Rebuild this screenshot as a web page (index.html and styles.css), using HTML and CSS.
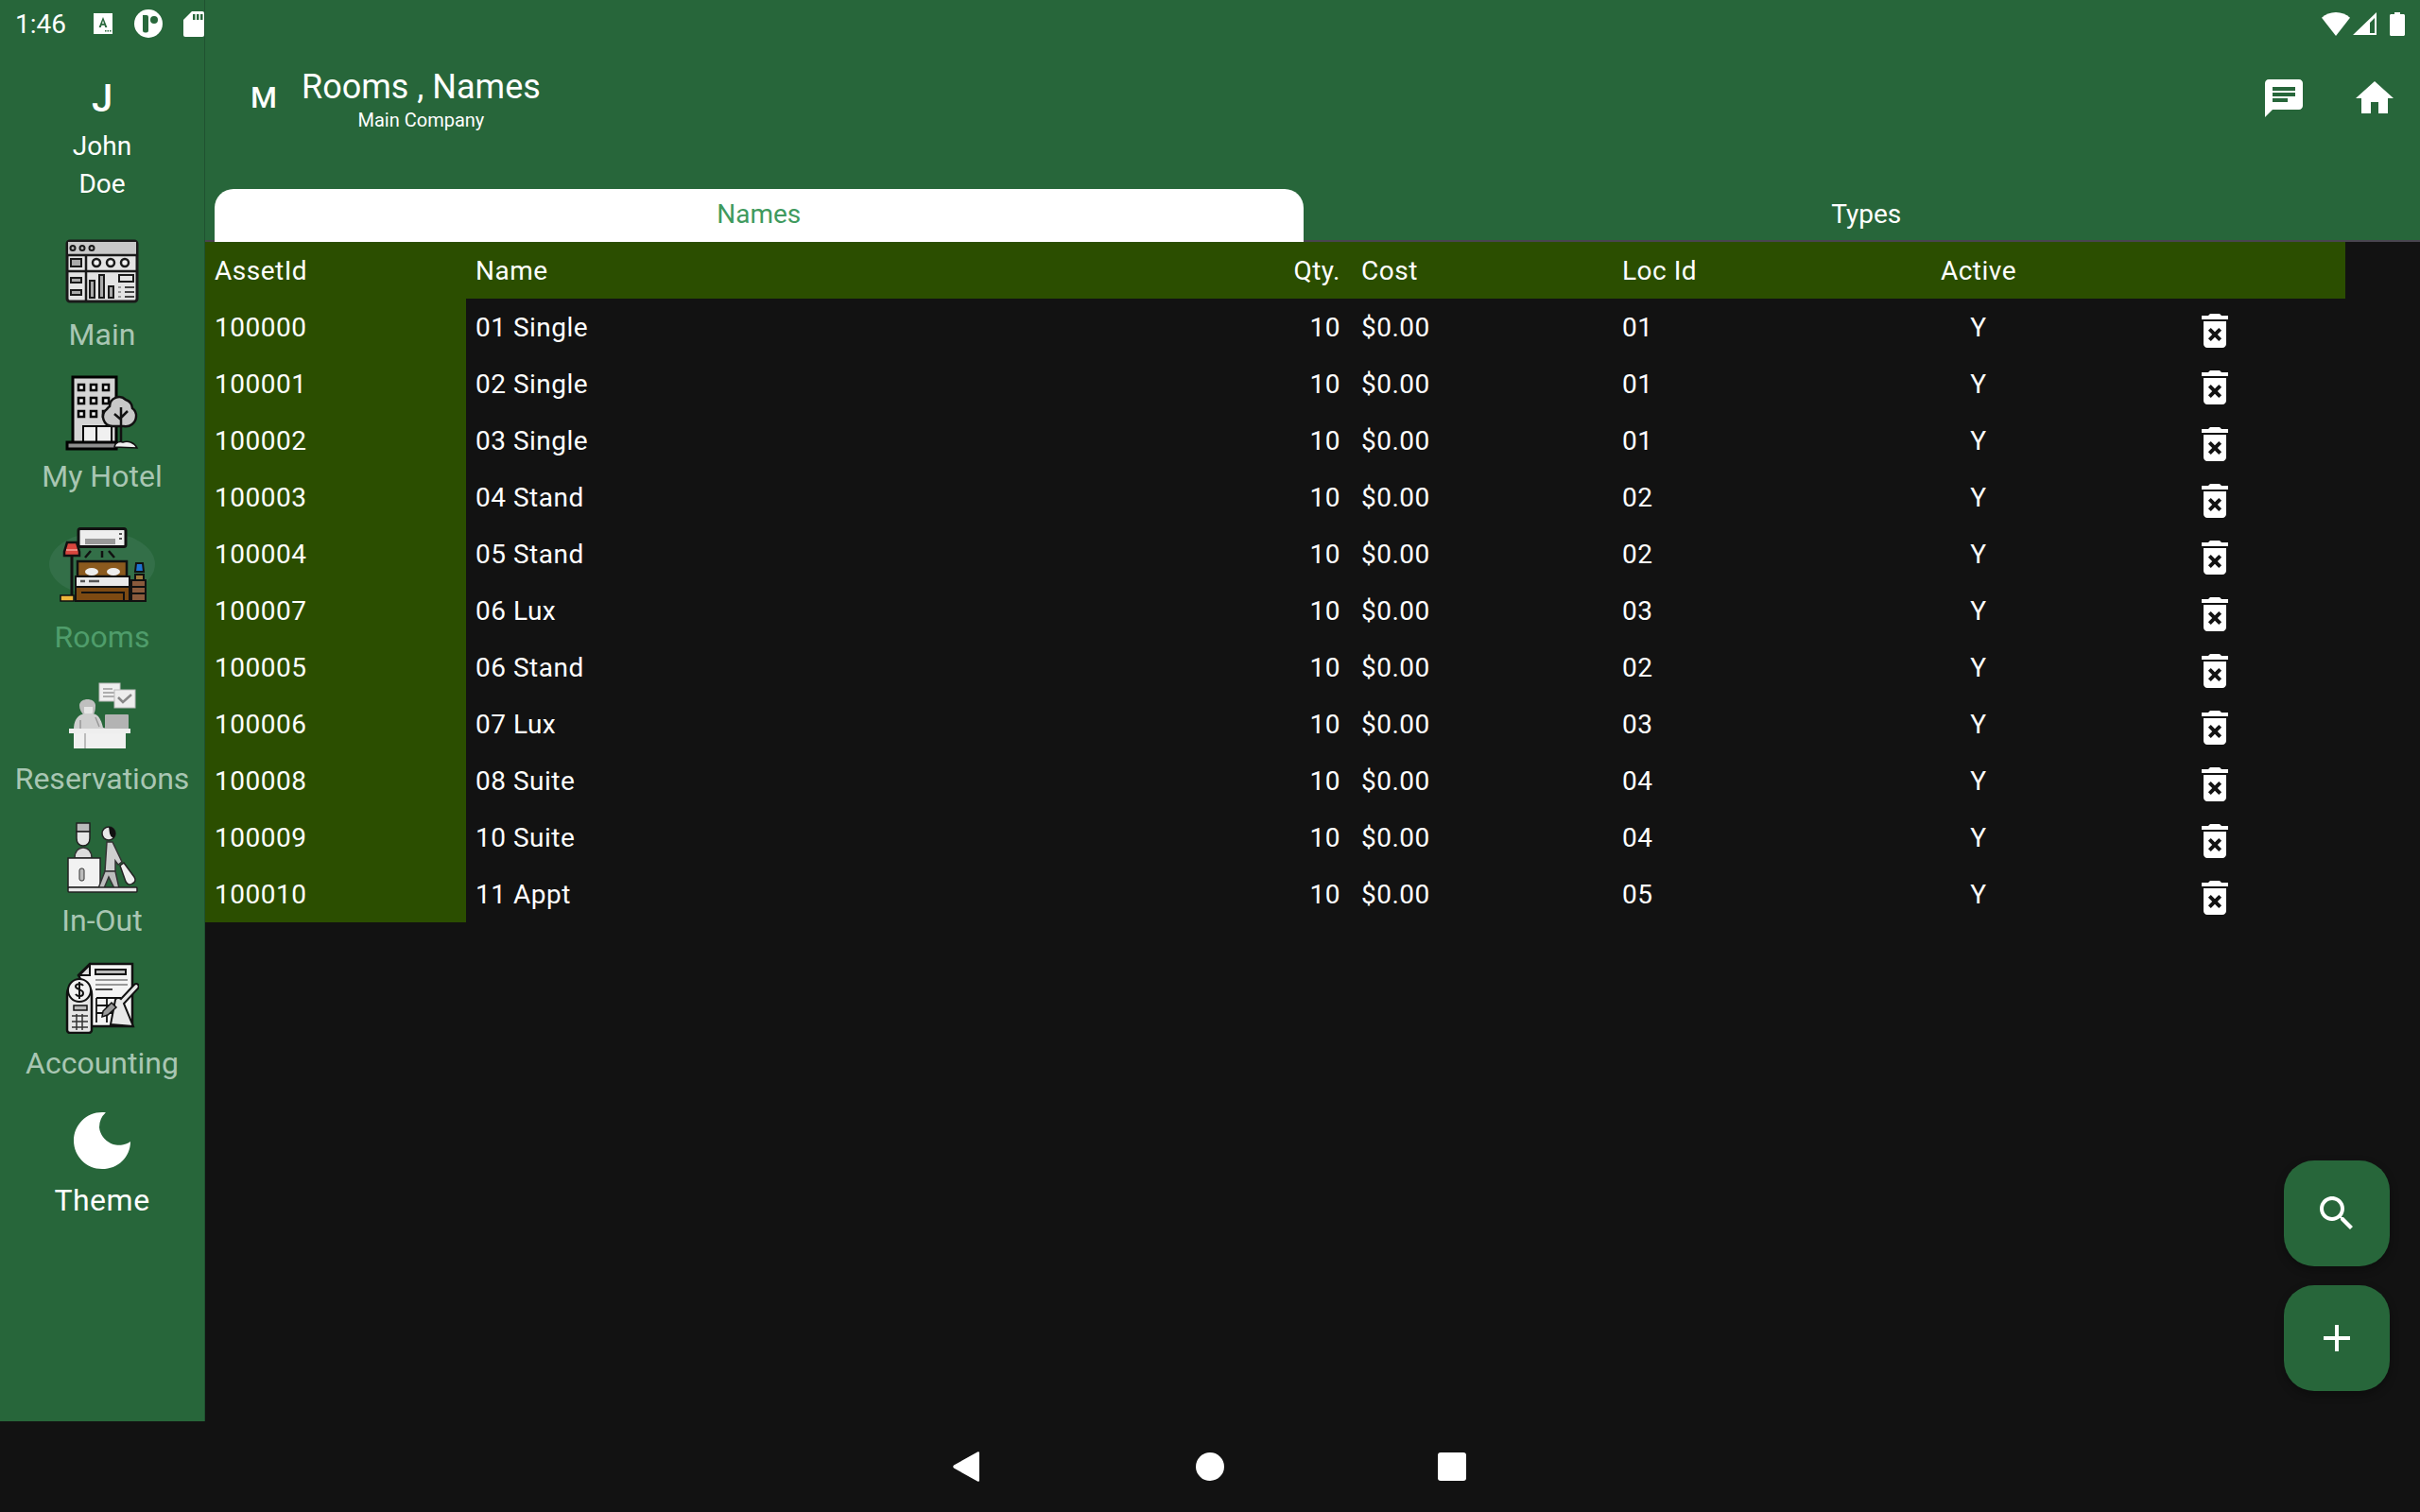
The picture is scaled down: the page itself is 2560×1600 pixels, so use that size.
FILE: index.html
```html
<!DOCTYPE html>
<html lang="en">
<head>
  <meta charset="UTF-8">
  <title>Rooms, Names</title>
  <link rel="stylesheet" href="styles.css">
</head>
<body>
  <div class="screen">
    <div class="content">

      <aside class="rail">
        <div class="status-left">
          <span class="clock">1:46</span>
          <svg class="st-a" viewBox="0 0 20 22"><path fill="#fff" d="M0 0h20v22H0z"/><path fill="#28673b" d="M10 4l4.400 11h-2.100l-.8-2.300h-3L7.700 15H5.600zM10 7.500l-.9 3.400h1.800zM12 18h1.500v1.500H12zM14.500 18H16v1.500h-1.500zM17 18h1.500v1.500H17z"/></svg>
          <svg class="st-p" viewBox="0 0 30 30"><circle cx="15" cy="15" r="15" fill="#fff"/><path fill="#28673b" d="M9 6h4a2 2 0 0 1 2 2v14a2.500 2.500 0 0 1-2.500 2.500h-1A2.500 2.500 0 0 1 9 22z"/><circle cx="21" cy="11" r="4" fill="#28673b"/></svg>
          <svg class="st-sd" viewBox="0 0 22 27"><path fill="#fff" d="M9 0h11a2 2 0 0 1 2 2v23a2 2 0 0 1-2 2H2a2 2 0 0 1-2-2V9z"/><path fill="#28673b" d="M10 3h2.500v6H10zM14 3h2.500v6H14zM18 3h2.500v6H18z"/></svg>
        </div>

        <div class="user">
          <div class="user-initial">J</div>
          <div class="user-name">John<br>Doe</div>
        </div>

        <a class="rail-item rail-main">
          <svg class="icon-main" viewBox="0 0 78 68">
            <rect x="2" y="2" width="74" height="64" rx="3" fill="#e4e4e4" stroke="#1a1a1a" stroke-width="3"/>
            <path d="M3 3h72v13H3z" fill="#c9c9c9"/>
            <path d="M2 17h74M2 34h74M22 17v49" stroke="#1a1a1a" stroke-width="2.500" fill="none"/>
            <g fill="#bbb" stroke="#1a1a1a" stroke-width="2"><circle cx="8" cy="9.500" r="2.500"/><circle cx="18" cy="9.500" r="2.500"/><circle cx="28" cy="9.500" r="2.500"/></g>
            <g fill="#f2f2f2" stroke="#1a1a1a" stroke-width="2.500"><circle cx="33" cy="25" r="4"/><circle cx="48" cy="25" r="4"/><circle cx="63" cy="25" r="4"/></g>
            <g fill="#aaa" stroke="#1a1a1a" stroke-width="2">
              <rect x="6" y="21" width="11" height="8"/><rect x="6" y="41" width="11" height="5"/><rect x="6" y="54" width="11" height="5"/>
              <rect x="26" y="44" width="5" height="18"/><rect x="36" y="38" width="5" height="24"/><rect x="46" y="50" width="5" height="12"/>
              <rect x="57" y="38" width="15" height="7" fill="#e4e4e4"/>
            </g>
            <path d="M63 51h10M63 56h10M63 61h10" stroke="#444" stroke-width="2"/>
            <path d="M56 51h3M56 56h3M56 61h3" stroke="#999" stroke-width="2"/>
          </svg>
          <span class="rail-label">Main</span>
        </a>

        <a class="rail-item rail-hotel">
          <svg class="icon-hotel" viewBox="0 0 79 80">
            <path d="M8 2h46v74H8z" fill="#d4d4d4" stroke="#000" stroke-width="3"/>
            <g fill="#f5f5f5" stroke="#000" stroke-width="2.500">
              <rect x="14" y="10" width="6" height="6"/><rect x="27" y="10" width="6" height="6"/><rect x="40" y="10" width="6" height="6"/>
              <rect x="14" y="24" width="6" height="6"/><rect x="27" y="24" width="6" height="6"/><rect x="40" y="24" width="6" height="6"/>
              <rect x="14" y="38" width="6" height="6"/><rect x="27" y="38" width="6" height="6"/><rect x="40" y="38" width="6" height="6"/>
            </g>
            <path d="M19 54h30v18H19z" fill="#f0f0f0" stroke="#000" stroke-width="2"/>
            <path d="M33 54v18" stroke="#000" stroke-width="2"/>
            <path d="M2 71h52v7H2z" fill="#8f8f8f" stroke="#000" stroke-width="3"/>
            <path d="M47 33a10 10 0 0 1 17-7 10 10 0 0 1 7 9 10 10 0 0 1 4 9 11 11 0 0 1-13 10H50a10 10 0 0 1-6-18 10 10 0 0 1 3-3z" fill="#c8c8c8" stroke="#111" stroke-width="2.500"/>
            <path d="M59 34v40M59 47l-7-6M59 45l7-7" stroke="#111" stroke-width="2.500" fill="none"/>
            <path d="M52 76c1-6 7-6 9-5 5-2 12 0 15 6z" fill="#f0f0f0" stroke="#111" stroke-width="1.500"/>
          </svg>
          <span class="rail-label">My Hotel</span>
        </a>

        <a class="rail-item rail-rooms">
          <div class="rooms-icon-wrap">
            <svg class="icon-rooms" viewBox="0 0 93 79">
              <rect x="21" y="1.500" width="50" height="19" rx="2" fill="#eee" stroke="#111" stroke-width="3"/>
              <path d="M28 12h32v6H28z" fill="#999"/>
              <path d="M64 7h3M64 12h3" stroke="#555" stroke-width="2"/>
              <path d="M34 25l-6 7M46 25v7M53 25l6 7" stroke="#111" stroke-width="2.500"/>
              <path d="M9 16h10l3 10v4H6v-4z" fill="#d9463e" stroke="#111" stroke-width="2.500"/>
              <path d="M8 24h12" stroke="#f08a80" stroke-width="2"/>
              <path d="M14 30v42" stroke="#111" stroke-width="3"/>
              <rect x="2" y="72" width="14" height="6" fill="#f0b93c" stroke="#111" stroke-width="1.500"/>
              <path d="M20 36h52v16H20z" fill="#8b5a1e" stroke="#111" stroke-width="2.500"/>
              <ellipse cx="35" cy="47" rx="7" ry="4" fill="#eee"/><ellipse cx="58" cy="47" rx="7" ry="4" fill="#eee"/>
              <rect x="18" y="52" width="57" height="11" fill="#e9e9e9" stroke="#111" stroke-width="2"/>
              <path d="M23 57h5M32 57h11" stroke="#555" stroke-width="2.500"/>
              <rect x="18" y="63" width="57" height="15" fill="#7d4a12" stroke="#111" stroke-width="2"/>
              <path d="M24 69h45v9" fill="none" stroke="#111" stroke-width="2"/>
              <path d="M82 38h7l1 9h-9z" fill="#1e73d2" stroke="#111" stroke-width="2"/>
              <path d="M81 50h9v6h-9z" fill="#a07a3c" stroke="#111" stroke-width="2"/>
              <rect x="77" y="56" width="15" height="22" fill="#8a5a3c" stroke="#111" stroke-width="2"/>
              <path d="M77 63h15M77 70h15" stroke="#111" stroke-width="2"/>
            </svg>
          </div>
          <span class="rail-label">Rooms</span>
        </a>

        <a class="rail-item rail-res">
          <svg class="icon-res" viewBox="0 0 71 70">
            <rect x="32" y="1" width="22" height="19" fill="#efefef" stroke="#bbb"/>
            <path d="M36 7h10M36 11h15M36 15h13" stroke="#999" stroke-width="1.500"/>
            <rect x="48" y="8" width="22" height="19" fill="#ededed" stroke="#bbb"/>
            <path d="M52 16l5 5 9-8" stroke="#888" stroke-width="2.500" fill="none"/>
            <path d="M11 24c1-8 16-8 17 0 0 6-1 9-3 11h-9c-3-3-5-6-5-11z" fill="#bfbfbf"/>
            <path d="M16 26h9v6c-2 4-7 4-9 0z" fill="#e6e6e6"/>
            <path d="M5 50c0-12 6-16 12-17h8c6 1 9 6 11 15l4 1v2H5z" fill="#cfcfcf"/>
            <path d="M12 50V40M28 37l4 10" stroke="#999" stroke-width="1.500"/>
            <rect x="38" y="34" width="25" height="16" rx="1" fill="#b3b3b3"/>
            <rect x="0" y="49" width="65" height="5" fill="#eee"/>
            <rect x="5" y="54" width="55" height="16" fill="#f0f0f0"/>
            <path d="M17 54v16" stroke="#bbb" stroke-width="2"/>
          </svg>
          <span class="rail-label">Reservations</span>
        </a>

        <a class="rail-item rail-inout">
          <svg class="icon-inout" viewBox="0 0 75 75">
            <path d="M10 1h14v9H10z" fill="#bbb" stroke="#222" stroke-width="1.500"/>
            <path d="M10 10h14v7c0 5-3 8-7 8s-7-3-7-8z" fill="#e6e6e6" stroke="#222" stroke-width="1.500"/>
            <path d="M8 38c0-7 4-11 9-11s9 4 9 11z" fill="#ddd" stroke="#333" stroke-width="1.500"/>
            <rect x="1" y="38" width="34" height="31" fill="#f2f2f2" stroke="#222" stroke-width="1.500"/>
            <rect x="13" y="49" width="5" height="13" rx="2" fill="#bbb" stroke="#333"/>
            <circle cx="44" cy="12" r="7" fill="#e8e8e8" stroke="#222" stroke-width="1.500"/>
            <path d="M44 5a7 7 0 0 1 5 12 7 7 0 0 1-4-5z" fill="#111"/>
            <path d="M42 21h6l10 21-4 3-3-4v11H40z" fill="#cfcfcf" stroke="#333" stroke-width="1.500"/>
            <path d="M40 52h11l4 18h-5l-6-12-5 12h-6z" fill="#bdbdbd" stroke="#333" stroke-width="1.500"/>
            <path d="M56 46l4-3 11 15c2 3 1 6-2 7-3 2-5 1-7-2z" fill="#efefef" stroke="#222" stroke-width="1.500"/>
            <rect x="1" y="69" width="73" height="5" rx="1" fill="#e8e8e8" stroke="#222" stroke-width="1.500"/>
          </svg>
          <span class="rail-label">In-Out</span>
        </a>

        <a class="rail-item rail-acc">
          <svg class="icon-acc" viewBox="0 0 78 76">
            <path d="M14 14L26 2h45v66H22V30z" fill="#f4f4f4" stroke="#111" stroke-width="2.500"/>
            <path d="M15 14h11V3z" fill="#ddd" stroke="#111" stroke-width="2"/>
            <rect x="32" y="8" width="32" height="5" fill="#bbb" stroke="#111" stroke-width="2"/>
            <path d="M32 19h34M32 24h34" stroke="#999" stroke-width="2"/>
            <path d="M32 29h18" stroke="#444" stroke-width="2"/>
            <path d="M33 38h26M33 46h24M33 54h20M33 38v26M44 38v26M55 38v12" stroke="#111" stroke-width="1.800" fill="none"/>
            <path d="M48 66l5-26c1-3 5-2 6-1l14-15c3-3 6 1 4 4L62 44l10 24z" fill="#e8e8e8" stroke="#111" stroke-width="2"/>
            <path d="M40 52l9-9 5 5-9 8-6 2z" fill="#999" stroke="#111" stroke-width="1.500"/>
            <path d="M2 34a13 13 0 0 1 26 0v38a3 3 0 0 1-3 3H5a3 3 0 0 1-3-3z" fill="#e6e6e6" stroke="#111" stroke-width="2.500"/>
            <circle cx="15" cy="30" r="12" fill="#f2f2f2" stroke="#111" stroke-width="2"/>
            <path d="M19 25c-2-3-8-2-8 1s8 3 8 7-6 4-8 1M15 21v18" stroke="#111" stroke-width="2" fill="none"/>
            <rect x="9" y="46" width="14" height="5" fill="#bbb" stroke="#111" stroke-width="1.500"/>
            <path d="M7 57h17M7 63h17M7 69h17M12 55v17M18 55v17" stroke="#333" stroke-width="1.500"/>
          </svg>
          <span class="rail-label">Accounting</span>
        </a>

        <a class="rail-item rail-theme">
          <svg class="icon-moon" viewBox="0 0 60 60"><path fill="#fff" d="M30 0c1.300 0 2.600.1 3.900.3A21 21 0 0 0 27 16a21 21 0 0 0 33 14.900C60 47.500 46.600 60 30 60 13.400 60 0 46.600 0 30S13.400 0 30 0z"/></svg>
          <span class="rail-label">Theme</span>
        </a>
      </aside>

      <main class="main">
        <header class="topbar">
          <div class="status-right">
            <svg class="st-wifi" viewBox="0 0 30 25"><path fill="#fff" d="M15 0c5.800 0 11 2.200 15 5.800L15 25 0 5.800C4 2.200 9.200 0 15 0z"/></svg>
            <svg class="st-signal" viewBox="0 0 25 24"><path fill="#fff" fill-rule="evenodd" d="M25 0v24H0zM23 6l-5 5v11h5z"/></svg>
            <svg class="st-batt" viewBox="0 0 16 25"><path fill="#fff" d="M5 0h6v2h3.500c.8 0 1.500.7 1.500 1.500v20c0 .8-.7 1.500-1.500 1.500h-13C.7 25 0 24.300 0 23.500v-20C0 2.700.7 2 1.500 2H5z"/></svg>
          </div>

          <div class="title-row">
            <div class="company-initial">M</div>
            <div class="title-block">
              <div class="page-title">Rooms , Names</div>
              <div class="page-sub">Main Company</div>
            </div>
            <div class="top-actions">
              <svg class="mi" viewBox="0 0 24 24"><path d="M20 2H4c-1.100 0-1.990.9-1.990 2L2 22l4-4h14c1.100 0 2-.9 2-2V4c0-1.100-.9-2-2-2zM6 9h12v2H6V9zm8 5H6v-2h8v2zm4-6H6V6h12v2z"/></svg>
              <svg class="mi" viewBox="0 0 24 24"><path d="M10 20v-6h4v6h5v-8h3L12 3 2 12h3v8z"/></svg>
            </div>
          </div>

          <div class="tabs">
            <div class="tab tab-active"><span>Names</span></div>
            <div class="tab"><span>Types</span></div>
          </div>
        </header>

        <table class="grid">
          <colgroup>
            <col class="c-id"><col class="c-name"><col class="c-qty"><col class="c-cost"><col class="c-loc"><col class="c-active"><col class="c-del">
          </colgroup>
          <thead>
            <tr>
              <th>AssetId</th><th>Name</th><th class="num">Qty.</th><th>Cost</th><th>Loc Id</th><th class="mid">Active</th><th></th>
            </tr>
          </thead>
          <tbody id="rows"></tbody>
        </table>

        <div class="fabs">
          <button class="fab"><svg class="mi" viewBox="0 0 24 24"><path d="M15.500 14h-.79l-.28-.27C15.410 12.590 16 11.110 16 9.500 16 5.910 13.090 3 9.500 3S3 5.910 3 9.500 5.910 16 9.500 16c1.610 0 3.090-.59 4.230-1.570l.27.28v.79l5 4.990L20.490 19l-4.990-5zm-6 0C7.010 14 5 11.990 5 9.500S7.010 5 9.500 5 14 7.010 14 9.500 11.990 14 9.500 14z"/></svg></button>
          <button class="fab"><svg class="mi" viewBox="0 0 24 24"><path d="M19 13h-6v6h-2v-6H5v-2h6V5h2v6h6v2z"/></svg></button>
        </div>
      </main>
    </div>

    <nav class="navbar">
      <svg class="nav-back" viewBox="0 0 28 32"><path fill="#fff" d="M26 .5c1-.6 2 0 2 1v29c0 1-1 1.600-2 1L1 17.500c-1-.7-1-2.300 0-3z"/></svg>
      <div class="nav-home"></div>
      <div class="nav-recent"></div>
    </nav>
  </div>

  <script>
    const rooms = [
      ['100000', '01 Single', '01'],
      ['100001', '02 Single', '01'],
      ['100002', '03 Single', '01'],
      ['100003', '04 Stand', '02'],
      ['100004', '05 Stand', '02'],
      ['100007', '06 Lux', '03'],
      ['100005', '06 Stand', '02'],
      ['100006', '07 Lux', '03'],
      ['100008', '08 Suite', '04'],
      ['100009', '10 Suite', '04'],
      ['100010', '11 Appt', '05']
    ];

    const trash = '<svg class="mi trash" viewBox="0 0 24 24"><path d="M6 19c0 1.100.9 2 2 2h8c1.100 0 2-.9 2-2V7H6v12zm2.460-7.120l1.410-1.410L12 12.590l2.120-2.120 1.410 1.410L13.410 14l2.120 2.120-1.410 1.410L12 15.410l-2.120 2.120-1.410-1.410L10.590 14l-2.130-2.120zM15.500 4l-1-1h-5l-1 1H5v2h14V4z"/></svg>';

    const body = document.getElementById('rows');
    for (let r of rooms) {
      const fila = document.createElement('tr');
      fila.innerHTML = `
        <td class="id">${r[0]}</td>
        <td>${r[1]}</td>
        <td class="num">10</td>
        <td>$0.00</td>
        <td>${r[2]}</td>
        <td class="mid">Y</td>
        <td class="del">${trash}</td>
      `;
      body.appendChild(fila);
    }
  </script>
</body>
</html>
```

FILE: styles.css
```css
:root {
  --verde: #27663a;
  --oliva: #2b4e00;
  --fondo: #121212;
  --apagado: #a9c6b3;
}

* {
  box-sizing: border-box;
}

body {
  margin: 0;
  font-family: Roboto, sans-serif;
  background-color: var(--fondo);
  color: #fff;
}

.screen {
  width: 2560px;
  height: 1600px;
  display: flex;
  flex-direction: column;
  overflow: hidden;
}

.content {
  height: 1504px;
  flex: none;
  display: flex;
}

.mi {
  display: block;
  width: 48px;
  height: 48px;
  fill: #fff;
}

/* barra lateral */
.rail {
  width: 217px;
  flex: none;
  background-color: var(--verde);
  border-right: 1px solid #1f5230;
  display: flex;
  flex-direction: column;
  align-items: center;
}

.status-left {
  width: 100%;
  height: 50px;
  flex: none;
  display: flex;
  align-items: center;
  padding-left: 16px;
}

.clock {
  font-size: 28px;
  width: 83px;
}

.st-a { width: 20px; height: 22px; }
.st-p { width: 30px; height: 30px; margin-left: 23px; }
.st-sd { width: 22px; height: 27px; margin-left: 22px; }

.user {
  margin-top: 31px;
  text-align: center;
}

.user-initial {
  font-size: 40px;
  font-weight: 500;
  line-height: 47px;
}

.user-name {
  font-size: 28px;
  line-height: 40px;
  margin-top: 7px;
}

.rail-item {
  display: flex;
  flex-direction: column;
  align-items: center;
}

.rail-label {
  font-size: 32px;
  line-height: 40px;
  color: var(--apagado);
  white-space: nowrap;
}

.rail-main { margin-top: 38px; }
.icon-main { width: 78px; height: 68px; margin-bottom: 13px; }

.rail-hotel { margin-top: 23px; }
.icon-hotel { width: 79px; height: 80px; margin-bottom: 7px; margin-left: 1px; }

.rail-rooms { margin-top: 34px; }
.rooms-icon-wrap {
  width: 112px;
  height: 80px;
  display: flex;
  justify-content: center;
  position: relative;
  margin-bottom: 16px;
}
.rooms-icon-wrap::before {
  content: "";
  position: absolute;
  left: 0;
  top: 5px;
  width: 112px;
  height: 68px;
  background-color: #336f48;
  border-radius: 50%;
}
.icon-rooms { width: 93px; height: 79px; flex: none; position: relative; }
.rail-rooms .rail-label { color: #4f9d6b; }

.rail-res { margin-top: 28px; }
.icon-res { width: 71px; height: 70px; margin-bottom: 12px; }

.rail-inout { margin-top: 26px; }
.icon-inout { width: 75px; height: 75px; margin-bottom: 9px; }

.rail-acc { margin-top: 24px; }
.icon-acc { width: 78px; height: 76px; margin-bottom: 11px; }

.rail-theme { margin-top: 32px; }
.icon-moon { width: 60px; height: 60px; margin-bottom: 13px; }
.rail-theme .rail-label { color: #fff; letter-spacing: 0.5px; }

/* cabecera */
.main {
  flex: 1;
  min-width: 0;
  position: relative;
}

.topbar {
  height: 256px;
  background-color: var(--verde);
  border-bottom: 2px solid #49454f;
  display: flex;
  flex-direction: column;
}

.status-right {
  height: 50px;
  flex: none;
  display: flex;
  justify-content: flex-end;
  align-items: center;
  padding-right: 16px;
}

.st-wifi { width: 30px; height: 25px; }
.st-signal { width: 25px; height: 24px; margin-left: 3px; }
.st-batt { width: 16px; height: 25px; margin-left: 14px; }

.title-row {
  height: 150px;
  flex: none;
  display: flex;
  align-items: flex-start;
}

.company-initial {
  font-size: 32px;
  font-weight: 500;
  line-height: 38px;
  margin: 34px 0 0 48px;
}

.title-block {
  margin: 20px 0 0 26px;
  display: flex;
  flex-direction: column;
  align-items: center;
}

.page-title {
  font-size: 36px;
  line-height: 44px;
}

.page-sub {
  font-size: 20px;
  line-height: 24px;
  margin-top: 1px;
}

.top-actions {
  margin: 30px 24px 0 auto;
  display: flex;
  gap: 48px;
}

.tabs {
  display: flex;
  height: 56px;
  flex: none;
}

.tab {
  flex: 1;
  display: flex;
  align-items: center;
  justify-content: center;
  font-size: 28px;
  margin: 0 10px;
  padding-bottom: 3px;
  border-radius: 20px 20px 0 0;
}

.tab-active {
  background-color: #fff;
  color: #3f9a5e;
  position: relative;
}

/* tabla */
.grid {
  width: 2264px;
  table-layout: fixed;
  border-collapse: collapse;
  font-size: 28px;
  letter-spacing: 0.5px;
}

.c-id { width: 276px; }
.c-name { width: 857px; }
.c-qty { width: 80px; }
.c-cost { width: 276px; }
.c-loc { width: 276px; }
.c-active { width: 222px; }
.c-del { width: 277px; }

th, td {
  height: 60px;
  padding: 0 10px;
  text-align: left;
  font-weight: 400;
  vertical-align: middle;
}

thead tr {
  background-color: var(--oliva);
}

.id {
  background-color: var(--oliva);
}

.num {
  text-align: right;
  padding-right: 12px;
}

.mid {
  text-align: center;
}

.del {
  padding: 10px 0 2px;
}

.trash {
  margin: 0 auto;
}

/* botones flotantes */
.fabs {
  position: absolute;
  right: 32px;
  bottom: 32px;
  display: flex;
  flex-direction: column;
  gap: 20px;
}

.fab {
  width: 112px;
  height: 112px;
  border: none;
  border-radius: 32px;
  background-color: var(--verde);
  display: flex;
  align-items: center;
  justify-content: center;
  padding: 0;
  box-shadow: 0 4px 10px rgba(0,0,0,0.3);
}

/* navegacion android */
.navbar {
  height: 96px;
  flex: none;
  background-color: var(--fondo);
  position: relative;
}

.nav-back {
  position: absolute;
  left: 1008px;
  top: 32px;
  width: 28px;
  height: 32px;
}

.nav-home {
  position: absolute;
  left: 1265px;
  top: 33px;
  width: 30px;
  height: 30px;
  border-radius: 50%;
  background-color: #fff;
}

.nav-recent {
  position: absolute;
  left: 1521px;
  top: 33px;
  width: 30px;
  height: 30px;
  border-radius: 3px;
  background-color: #fff;
}
```
